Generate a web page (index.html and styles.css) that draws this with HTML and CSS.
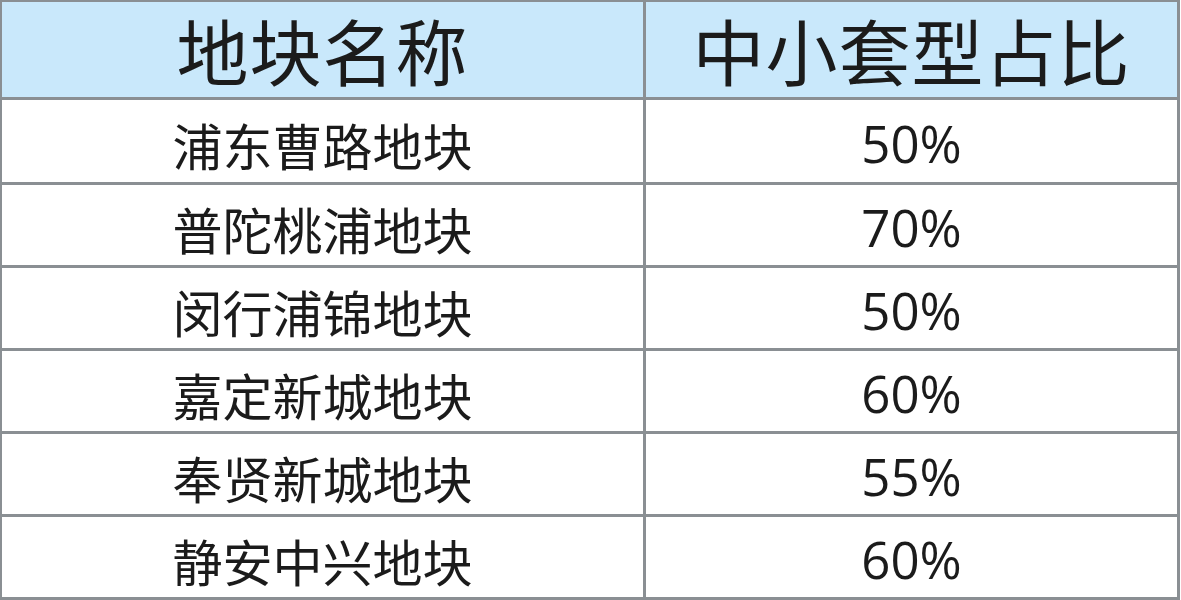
FILE: index.html
```html
<!DOCTYPE html>
<html lang="zh">
<head>
<meta charset="utf-8">
<link rel="stylesheet" href="styles.css">
</head>
<body>
<div class="table">
  <div class="cell head">地块名称</div>
  <div class="cell head">中小套型占比</div>
  <div class="cell name">浦东曹路地块</div>
  <div class="cell pct">50%</div>
  <div class="cell name">普陀桃浦地块</div>
  <div class="cell pct">70%</div>
  <div class="cell name">闵行浦锦地块</div>
  <div class="cell pct">50%</div>
  <div class="cell name">嘉定新城地块</div>
  <div class="cell pct">60%</div>
  <div class="cell name">奉贤新城地块</div>
  <div class="cell pct">55%</div>
  <div class="cell name">静安中兴地块</div>
  <div class="cell pct">60%</div>
</div>
</body>
</html>
```

FILE: styles.css
```css
html, body {
  margin: 0;
  padding: 0;
  background: #ffffff;
}
.table {
  width: 1180px;
  height: 600px;
  box-sizing: border-box;
  padding: 2px 3px 3px 2px;
  background: #8a8f93;
  display: grid;
  grid-template-columns: 641px 1fr;
  grid-template-rows: 95px 82px repeat(5, 80px);
  gap: 3px;
  color: #1b1b1b;
  font-family: "Noto Sans CJK SC", "Noto Sans", sans-serif;
}
.cell {
  background: #ffffff;
  display: flex;
  align-items: center;
  justify-content: center;
  line-height: 1.25;
  box-sizing: border-box;
}
.head {
  background: #c9e8fb;
  font-size: 72px;
  letter-spacing: 1px;
  padding-bottom: 2px;
}
.name {
  font-size: 50px;
  padding-top: 6px;
}
.pct {
  font-family: "Open Sans", "Noto Sans", sans-serif;
  font-size: 51px;
  padding-top: 6px;
}
```
